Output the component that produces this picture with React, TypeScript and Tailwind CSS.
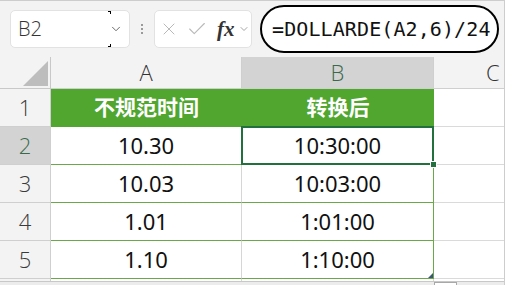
import { Check, ChevronDown, X } from "lucide-react"

const rows = [
  { a: "10.30", b: "10:30:00" },
  { a: "10.03", b: "10:03:00" },
  { a: "1.01", b: "1:01:00" },
  { a: "1.10", b: "1:10:00" },
]

const sans = "font-['Noto_Sans','Noto_Sans_CJK_SC',sans-serif]"
const light = "font-['Open_Sans','Noto_Sans',sans-serif] font-light"

function RowHeader({ n, active }: { n: number; active?: boolean }) {
  return (
    <div
      className={`flex items-center justify-center border-r border-b border-[#cfcfcf] text-[22px] ${light} ${
        active ? "bg-[#d3d3d3] text-[#3a6a4c]" : "bg-[#f3f3f3] text-[#3a3a3a]"
      }`}
    >
      {n}
    </div>
  )
}

export default function App() {
  return (
    <div className="w-[505px] h-[285px] overflow-hidden bg-[#f3f3f3] flex flex-col border-t border-r border-[#cdcdcd]">
      {/* name box + formula bar */}
      <div className="h-[56px] shrink-0 flex items-center pl-[10px]">
        <div className="relative w-[120px] h-[38px] bg-white border border-[#e2e2e2] rounded-[5px] flex items-center pl-[7px]">
          <span className={`text-[20px] text-[#333] ${light}`}>B2</span>
          <div className="absolute left-[97px] top-0 w-[3px] h-[3px] border-t border-r border-black" />
          <div className="absolute left-[97px] bottom-0 w-[3px] h-[3px] border-b border-r border-black" />
          <ChevronDown className="ml-auto mr-[6px] w-[14px] h-[14px] text-[#555]" strokeWidth={1.5} />
        </div>
        <div className="ml-[11px] flex flex-col gap-[2px]">
          <div className="w-[2px] h-[2px] bg-[#9a9a9a]" />
          <div className="w-[2px] h-[2px] bg-[#9a9a9a]" />
          <div className="w-[2px] h-[2px] bg-[#9a9a9a]" />
        </div>
        <div className="ml-[11px] w-[98px] h-[38px] bg-white border border-[#e2e2e2] rounded-[5px] flex items-center pl-[4px]">
          <X className="w-[20px] h-[20px] text-[#b9b9b9]" strokeWidth={1.2} />
          <Check className="ml-[7px] w-[22px] h-[22px] text-[#b9b9b9]" strokeWidth={1.2} />
          <span className="ml-[9px] text-[21px] italic font-bold text-[#333] font-['Liberation_Serif',serif] leading-none">
            fx
          </span>
          <ChevronDown className="ml-[3px] w-[12px] h-[12px] text-[#888]" strokeWidth={1.5} />
        </div>
        <div className="ml-[8px] w-[239px] h-[48px] shrink-0 bg-white rounded-full border-[2.5px] border-black flex items-center pl-[10px]">
          <span className="text-[20px] text-[#111] font-['DejaVu_Sans_Mono',monospace] tracking-[0.1px]">
            =DOLLARDE(A2,6)/24
          </span>
        </div>
      </div>

      {/* sheet */}
      <div className="grid grid-cols-[51px_191px_192px_112px] grid-rows-[32px_38px_38px_38px_38px_38px_2px] shrink-0">
        <div className="border-r border-b border-[#c8c8c8] bg-[#f3f3f3]">
          <svg width="51" height="31" className="block">
            <polygon points="48,4 48,29 23,29" fill="#bdbdbd" />
          </svg>
        </div>
        <div className={`flex items-center justify-center border-r border-b border-[#cfcfcf] text-[22px] text-[#333] ${light}`}>
          A
        </div>
        <div className={`flex items-center justify-center border-r border-b border-[#cfcfcf] bg-[#d3d3d3] text-[22px] text-[#3a6a4c] ${light}`}>
          B
        </div>
        <div className={`flex items-center pl-[52px] border-b border-[#cfcfcf] text-[22px] text-[#333] ${light}`}>
          C
        </div>

        <RowHeader n={1} />
        <div className={`flex items-center justify-center bg-[#50a62f] text-white text-[21px] font-bold ${sans}`}>
          不规范时间
        </div>
        <div className={`flex items-center justify-center bg-[#50a62f] text-white text-[21px] font-bold ${sans}`}>
          转换后
        </div>
        <div className="bg-white border-b border-[#dadada]" />

        {rows.map((r, i) => (
          <div key={r.a} className="contents">
            <RowHeader n={i + 2} active={i === 0} />
            <div
              className={`flex items-center justify-center bg-white border-r border-r-[#d6d6d6] border-b border-b-[#6aa84a] text-[22px] text-[#111] ${sans}`}
            >
              {r.a}
            </div>
            <div
              className={`relative flex items-center justify-center bg-white border-r border-b border-[#6aa84a] text-[22px] text-[#111] ${sans}`}
            >
              {r.b}
              {i === 0 && (
                <div className="absolute -left-px -top-px -right-px -bottom-px border-2 border-[#23703f] z-10">
                  <div className="absolute -right-[5px] -bottom-[5px] w-[7px] h-[7px] bg-[#23703f] border border-white" />
                </div>
              )}
              {i === rows.length - 1 && (
                <svg width="5" height="5" className="absolute right-0 bottom-0">
                  <polygon points="5,0 5,5 0,5" fill="#3c5673" />
                </svg>
              )}
            </div>
            <div className="bg-white border-b border-[#dadada]" />
          </div>
        ))}

        <div className="bg-[#f3f3f3] border-r border-[#cfcfcf]" />
        <div className="bg-white border-r border-[#d6d6d6]" />
        <div className="bg-white border-r border-[#d6d6d6]" />
        <div className="bg-white" />
      </div>

      {/* bottom scroll strip */}
      <div className="flex-1 border-t border-[#c8c8c8] bg-[#ececec] pl-[434px]">
        <div className="w-[23px] h-[8px] bg-white border border-[#a8a8a8]" />
      </div>
    </div>
  )
}
